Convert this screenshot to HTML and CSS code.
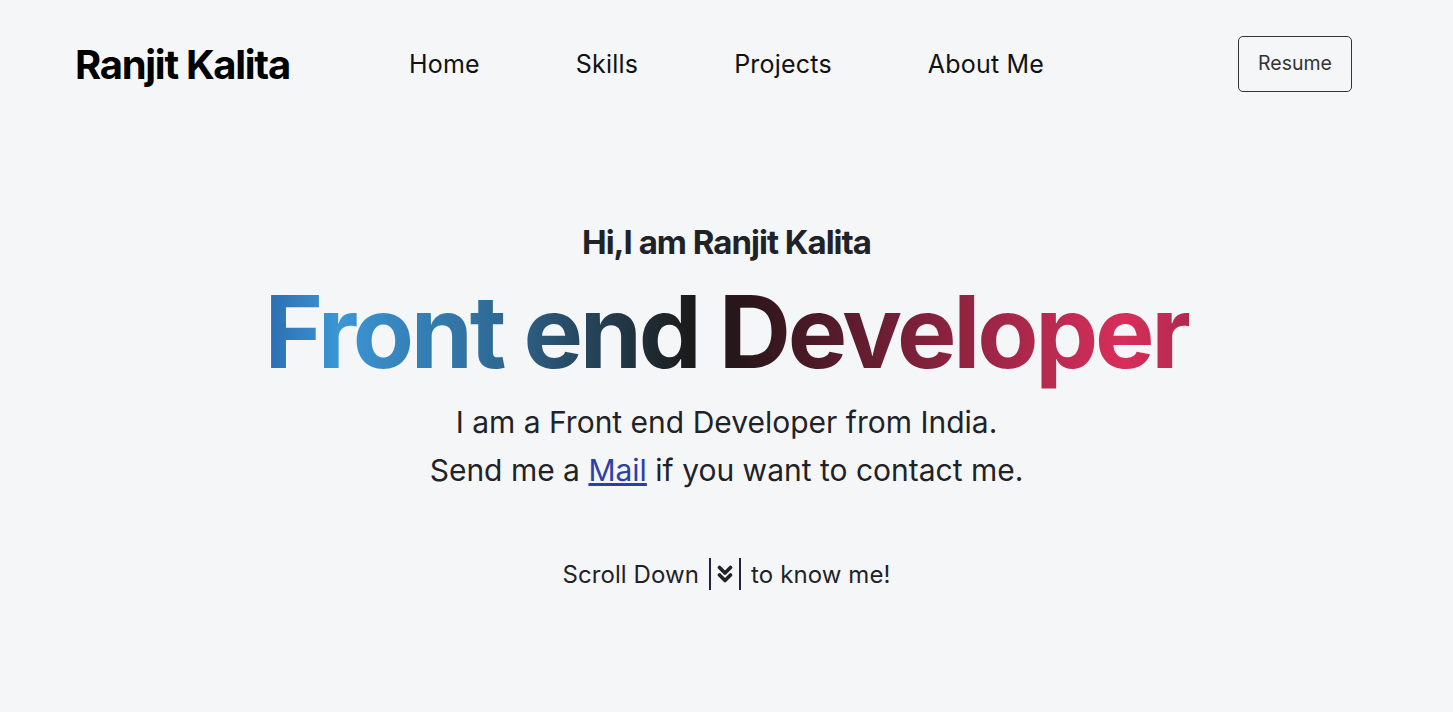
FILE: index.html
```html
<!DOCTYPE html>
<html lang="en">
<head>
<meta charset="utf-8">
<title>Ranjit Kalita</title>
<link rel="stylesheet" href="styles.css">
</head>
<body>
<header class="nav">
  <div class="logo">Ranjit Kalita</div>
  <nav class="links">
    <a href="#">Home</a>
    <a href="#">Skills</a>
    <a href="#">Projects</a>
    <a href="#">About Me</a>
  </nav>
  <button class="resume">Resume</button>
</header>
<main class="hero">
  <h2 class="hi">Hi,I am Ranjit Kalita</h2>
  <h1 class="title">Front end Developer</h1>
  <p class="intro">I am a Front end Developer from India.<br>Send me a <a href="#" class="mail">Mail</a> if you want to contact me.</p>
  <p class="scroll">Scroll Down <span class="bar"></span><svg class="chev" viewBox="0 0 16 18" width="16" height="18"><path d="M2.5 2.5l5.5 5.5 5.5-5.5M2.5 10l5.5 5.5 5.5-5.5" fill="none" stroke="#1f2328" stroke-width="3.6" stroke-linecap="round" stroke-linejoin="round"/></svg><span class="bar bar-r"></span> to know me!</p>
</main>
</body>
</html>
```
FILE: styles.css
```css
* { box-sizing: border-box; }
html, body { margin: 0; padding: 0; }
body {
  background: #f5f6f8;
  font-family: Inter, "Noto Sans", sans-serif;
  color: #1f2328;
  height: 712px;
}
.nav {
  display: flex;
  align-items: center;
  height: 128px;
  padding: 0 101px 0 75px;
}
.logo {
  font-size: 40px;
  font-weight: 700;
  letter-spacing: -1.3px;
  color: #000;
  width: 334px;
}
.links {
  display: flex;
  gap: 96px;
  flex: 1;
}
.links a {
  font-size: 25px;
  letter-spacing: 0.2px;
  color: #111;
  text-decoration: none;
}
.resume {
  width: 114px;
  height: 56px;
  border: 1px solid #333;
  border-radius: 5px;
  background: transparent;
  font-family: Inter, sans-serif;
  font-size: 19.5px;
  color: #333;
  padding: 0 0 2px;
}
.hero {
  display: flex;
  flex-direction: column;
  align-items: center;
  text-align: center;
  padding-top: 94px;
}
.hi {
  margin: 0;
  font-size: 33px;
  font-weight: 700;
  letter-spacing: -1px;
  line-height: 40px;
  color: #1f2328;
}
.title {
  margin: 10px 0 0;
  font-size: 100px;
  font-weight: 700;
  letter-spacing: -3.3px;
  line-height: 120px;
  background: linear-gradient(90deg, #2c6cb0 0%, #3b96d6 8%, #2f6a96 25%, #1b1b1b 46%, #2a161a 52%, #7a2038 70%, #c52c55 88%, #d72e5a 93%, #b02a4e 100%);
  -webkit-background-clip: text;
  background-clip: text;
  color: transparent;
}
.intro {
  margin: 6px 0 0;
  font-size: 30px;
  line-height: 48px;
  color: #1f2328;
}
.mail { color: #2c3fa8; }
.scroll {
  margin: 64px 0 0;
  font-size: 24px;
  letter-spacing: 0.1px;
  display: flex;
  align-items: center;
  color: #1f2328;
}
.bar {
  display: inline-block;
  width: 2px;
  height: 32px;
  background: #1f2340;
  margin: 0 6px 0 10px;
}
.bar-r { margin: 0 10px 0 6px; }
.chev { display: block; }
```
